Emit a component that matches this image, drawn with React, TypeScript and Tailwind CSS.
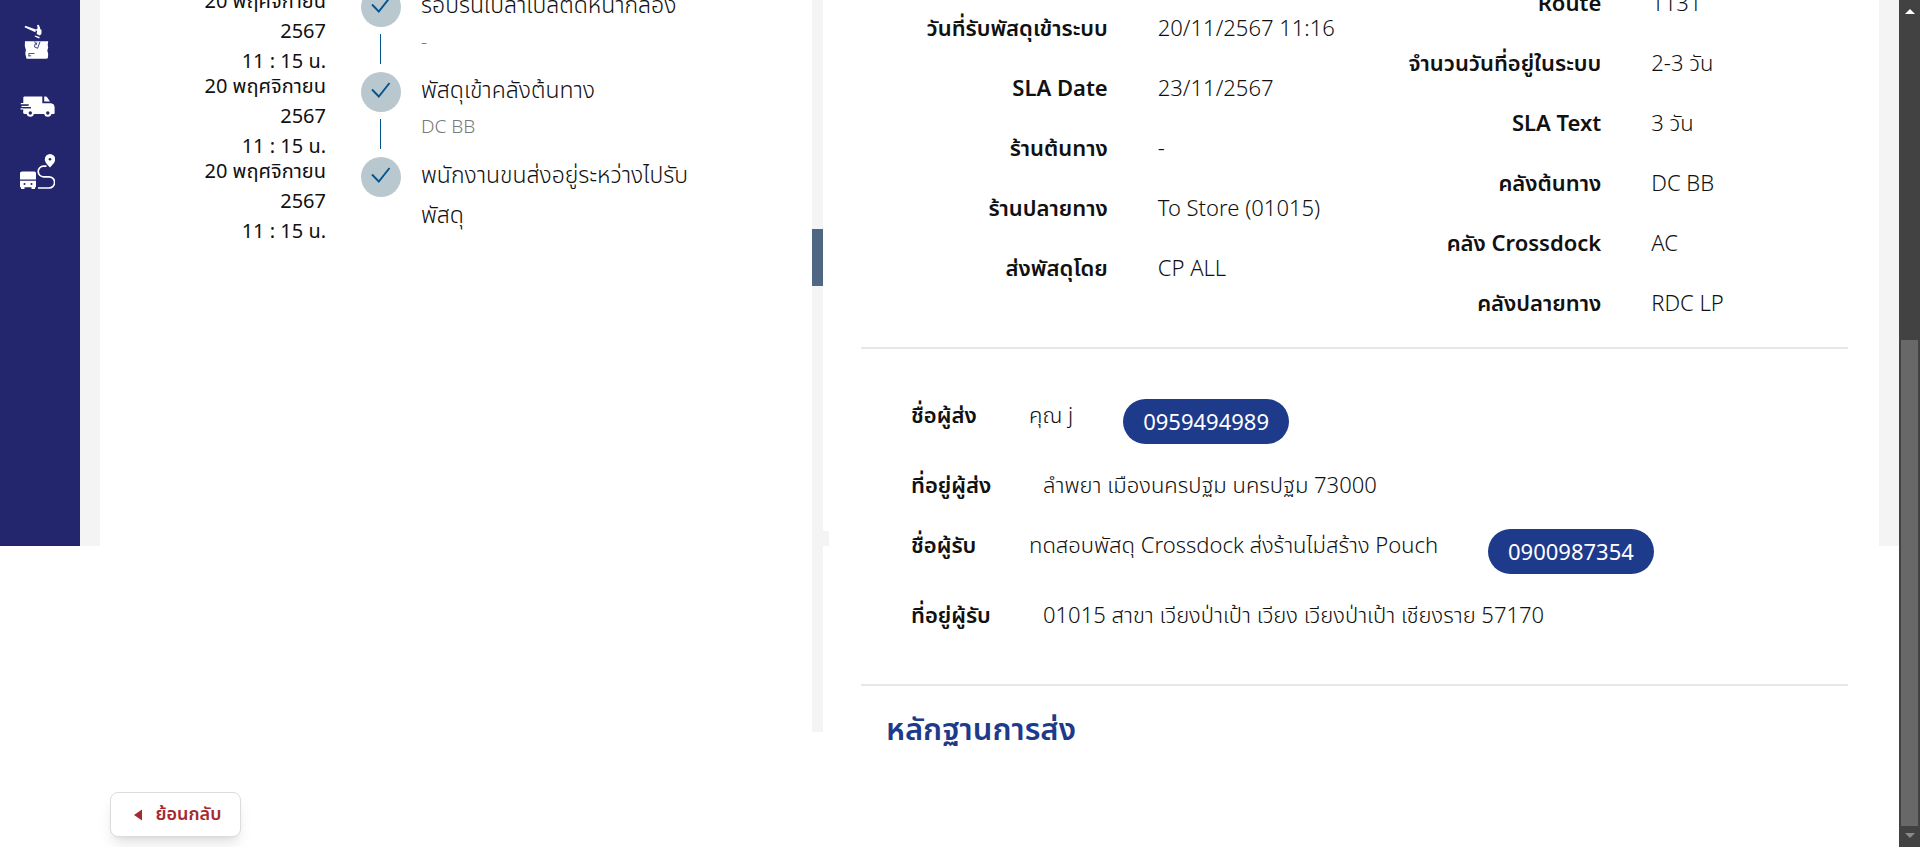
import React from "react";

type Step = { date: string[]; title: string; place?: string };

const steps: Step[] = [
  { date: ["20 พฤศจิกายน", "2567", "11 : 15 น."], title: "รอปริ้นใบลาเบลติดหน้ากล่อง", place: "-" },
  { date: ["20 พฤศจิกายน", "2567", "11 : 15 น."], title: "พัสดุเข้าคลังต้นทาง", place: "DC BB" },
  { date: ["20 พฤศจิกายน", "2567", "11 : 15 น."], title: "พนักงานขนส่งอยู่ระหว่างไปรับพัสดุ" },
];

const parcel: [string, string][] = [
  ["วันที่รับพัสดุเข้าระบบ", "20/11/2567 11:16"],
  ["SLA Date", "23/11/2567"],
  ["ร้านต้นทาง", "-"],
  ["ร้านปลายทาง", "To Store (01015)"],
  ["ส่งพัสดุโดย", "CP ALL"],
];

const routing: [string, string][] = [
  ["Route", "1131"],
  ["จำนวนวันที่อยู่ในระบบ", "2-3 วัน"],
  ["SLA Text", "3 วัน"],
  ["คลังต้นทาง", "DC BB"],
  ["คลัง Crossdock", "AC"],
  ["คลังปลายทาง", "RDC LP"],
];

function DamagedBoxIcon() {
  return (
    <svg viewBox="0 0 35 35" className="size-[35px]" fill="#fff" aria-hidden="true">
      <path d="M4.500 3.200 5.300 1.800 16 5.600l-.7 2.600z" />
      <path d="M16.800 1.300 18.700.8q1.300 2.300 1.700 4.400l1.200.8-.2 4-1.600 1.500-3.200-1.500.5-2.800-1.500-1.500 1.900-1.200q.3-1.800-.7-3.200z" />
      <path d="m14.600 12.600.5-1 4.600 1.500-.6 1.500z" />
      <path d="M5 17.300h23.200l-.5 3.700.5 2.500-.9 3 .9 3.500-.4 4.200-1.800.5H6.600l-.6-2-.7-3.200.6-3.500-1.100-4z" />
      <path d="m14.800 17.500.6 2-1 3.300 3.200 1.500 2.400-6.600M16.800 18.500l-.7 2.500" stroke="#23266d" strokeWidth=".9" fill="none" />
      <path d="M8.800 32.500v-3h5.700M9 31.800h2.200" stroke="#23266d" strokeWidth=".8" fill="none" />
    </svg>
  );
}

function VanIcon() {
  return (
    <svg viewBox="0 0 35 21" className="h-[21px] w-[35px]" fill="#fff" aria-hidden="true">
      <path d="M3.300 1.500Q3.500.5 4.500.5h17.800v6.700h8.900l2.600 1.300.8 2.500v6q0 1-1 1H5q-1.700 0-1.900-1.500l.2-3H.5v-1.200h10.300V11H1.500V9.800H8V8.500H.8V7h2.500z" />
      <path d="M24.200.5h1.500q.9 0 1.400.8l2.900 4.200h-5.800z" />
      <path d="M1 9h8M3 11.700h8" stroke="#23266d" strokeWidth="1.200" />
      <circle cx="10.300" cy="17" r="3.700" />
      <circle cx="27.800" cy="17" r="3.700" />
      <circle cx="10.300" cy="17" r="1.700" fill="#23266d" />
      <circle cx="27.800" cy="17" r="1.700" fill="#23266d" />
    </svg>
  );
}

function RouteIcon() {
  return (
    <svg viewBox="0 0 35 35" className="size-[35px]" fill="#fff" aria-hidden="true">
      <path d="M30 0a5.200 5.200 0 0 1 5.200 5.200C35.200 8.500 32 11 30 13.500 28 11 24.800 8.500 24.800 5.200A5.200 5.200 0 0 1 30 0z" />
      <circle cx="30" cy="5.200" r="1.300" fill="#23266d" />
      <path d="M26.500 12.200h-3a5.200 5.200 0 0 0 0 10.600h5.500a5.600 5.600 0 0 1 0 11.200H18" fill="none" stroke="#fff" strokeWidth="1.700" />
      <path d="M2 17.500h12.500q1.500 0 1.500 1.500v6.500H0V19q0-1.500 2-1.500z" />
      <path d="M0 26.800h16v6.400h-1V35h-3.500v-1.800h-7V35H1v-1.800H0z" />
      <circle cx="4.500" cy="30" r="1" fill="#23266d" />
      <circle cx="11.500" cy="30" r="1" fill="#23266d" />
    </svg>
  );
}

function Check() {
  return (
    <span className="flex size-10 shrink-0 items-center justify-center rounded-full bg-[#b9c8cf]">
      <svg viewBox="0 0 40 40" className="size-10" fill="none" stroke="#04548f" strokeWidth="1.900" aria-hidden="true">
        <path d="m11 17.500 6.800 7L28.500 11" />
      </svg>
    </span>
  );
}

function Timeline() {
  return (
    <ol className="-mt-[14px] pl-[90px] pr-[120px]">
      {steps.map((step, i) => (
        <li key={i} className="flex h-[85px] items-start">
          <div className="w-[136px] shrink-0 text-right text-[20px] leading-[30px]">
            {step.date.map((line) => (
              <div key={line} className="whitespace-nowrap">{line}</div>
            ))}
          </div>
          <div className="ml-[35px] flex shrink-0 flex-col items-center gap-[7px] pt-px">
            <Check />
            {i < steps.length - 1 && <span className="mr-px h-[30px] w-px bg-[#04548f]" />}
          </div>
          <div className="ml-5 max-w-[284px] flex-1">
            <p className="-mt-0.5 text-[23px] font-light leading-10">{step.title}</p>
            {step.place && <p className="text-[19px] font-light leading-[34px] text-[#77787c]">{step.place}</p>}
          </div>
        </li>
      ))}
    </ol>
  );
}

function Facts({ rows }: { rows: [string, string][] }) {
  return (
    <dl className="flex-1">
      {rows.map(([label, value]) => (
        <div key={label} className="grid grid-cols-2 leading-[60px]">
          <dt className="whitespace-nowrap text-right font-semibold">{label}</dt>
          <dd className="whitespace-nowrap pl-[50px] font-light">{value}</dd>
        </div>
      ))}
    </dl>
  );
}

function Person({ label, name, phone }: { label: string; name: string; phone: string }) {
  return (
    <div className="flex h-[70px] items-start gap-[50px] whitespace-nowrap leading-[60px]">
      <span className="min-w-[68px] font-semibold">{label}</span>
      <span className="font-light">{name}</span>
      <a href={"tel:" + phone} className="mt-[15px] rounded-full bg-[#1e3a8a] px-5 pb-px leading-[44px] text-white">
        {phone}
      </a>
    </div>
  );
}

function Address({ label, text }: { label: string; text: string }) {
  return (
    <div className="flex gap-[50px] whitespace-nowrap leading-[60px]">
      <span className="min-w-[82px] font-semibold">{label}</span>
      <span className="font-light">{text}</span>
    </div>
  );
}

export default function App() {
  return (
    <div className="flex h-screen overflow-hidden bg-white font-['Noto_Sans','Noto_Sans_Thai',sans-serif] text-[#111111]">
      <div className="flex h-[546px] min-w-0 flex-1 bg-[#f4f4f4]">
        <nav className="flex w-20 shrink-0 flex-col items-start bg-[#23266d] pl-5 pt-6">
          <a href="#damaged" aria-label="พัสดุเสียหาย"><DamagedBoxIcon /></a>
          <a href="#delivery" aria-label="จัดส่ง" className="mt-[37px]"><VanIcon /></a>
          <a href="#tracking" aria-label="ติดตาม" className="mt-[37px]"><RouteIcon /></a>
        </nav>

        <main className="grid min-w-0 flex-1 grid-cols-[minmax(0,729fr)_minmax(0,1050fr)] items-start px-5">
          <div>
            <div className="flex items-start">
              <section className="h-[732px] min-w-0 flex-1 bg-white">
                <Timeline />
              </section>
              <div className="h-[732px] w-[11px] bg-[#f4f4f4] pt-[229px]">
                <div className="h-[57px] bg-[#4f6782]" />
              </div>
              <div className="h-[531px] w-[6px] bg-white" />
            </div>
            <button
              type="button"
              className="ml-[10px] mt-[60px] flex h-[45px] w-[131px] items-center justify-center gap-[14px] rounded-lg border border-[#dcdcdc] bg-white pb-0.5 pl-1 text-[18px] font-semibold text-[#a52a2f] shadow-lg"
            >
              <svg viewBox="0 0 8 12" className="mt-0.5 h-3 w-2" fill="currentColor" aria-hidden="true">
                <path d="M8 .5v11L0 6z" />
              </svg>
              ย้อนกลับ
            </button>
          </div>

          <section className="bg-white pl-8 pr-[31px] text-[22px]">
            <div className="-mt-7 flex">
              <div className="flex flex-1 pt-[25px]"><Facts rows={parcel} /></div>
              <Facts rows={routing} />
            </div>
            <hr className="mt-[15px] border-t-2 border-[#e5e7eb]" />
            <div className="mt-[35px] pl-[50px]">
              <Person label="ชื่อผู้ส่ง" name="คุณ j" phone="0959494989" />
              <Address label="ที่อยู่ผู้ส่ง" text="ลำพยา เมืองนครปฐม นครปฐม 73000" />
              <Person label="ชื่อผู้รับ" name="ทดสอบพัสดุ Crossdock ส่งร้านไม่สร้าง Pouch" phone="0900987354" />
              <Address label="ที่อยู่ผู้รับ" text="01015 สาขา เวียงป่าเป้า เวียง เวียงป่าเป้า เชียงราย 57170" />
            </div>
            <hr className="mt-10 border-t-2 border-[#e5e7eb]" />
            <h2 className="mt-[22px] pl-[25px] text-[31px] font-semibold leading-10 text-[#1e3a8a]">หลักฐานการส่ง</h2>
          </section>
        </main>
      </div>

      <div className="flex w-[21px] shrink-0 flex-col items-center bg-[#424242]" aria-hidden="true">
        <svg viewBox="0 0 10 5" className="mt-[9px] h-[5px] w-[10px]" fill="#fff"><path d="M5 0l5 5H0z" /></svg>
        <div className="mb-[7px] mt-[326px] w-[17px] flex-1 bg-[#686868]" />
        <svg viewBox="0 0 10 5" className="mb-[9px] h-[5px] w-[10px]" fill="#8a8a8a"><path d="M0 0h10L5 5z" /></svg>
      </div>
    </div>
  );
}
